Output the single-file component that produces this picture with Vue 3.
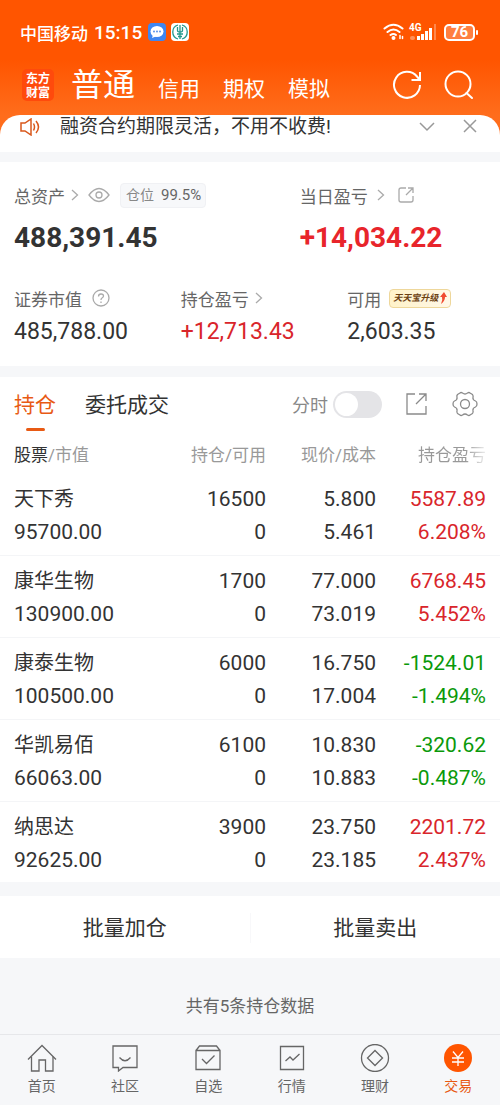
<script setup>
import { ref } from 'vue'

const accountTabs = ['普通', '信用', '期权', '模拟']
const activeAccount = ref('普通')
const activeTab = ref('持仓')
const timeShare = ref(false)

const holdings = [
  { name: '天下秀', value: '95700.00', amount: '16500', usable: '0', price: '5.800', cost: '5.461', profit: '5587.89', rate: '6.208%' },
  { name: '康华生物', value: '130900.00', amount: '1700', usable: '0', price: '77.000', cost: '73.019', profit: '6768.45', rate: '5.452%' },
  { name: '康泰生物', value: '100500.00', amount: '6000', usable: '0', price: '16.750', cost: '17.004', profit: '-1524.01', rate: '-1.494%' },
  { name: '华凯易佰', value: '66063.00', amount: '6100', usable: '0', price: '10.830', cost: '10.883', profit: '-320.62', rate: '-0.487%' },
  { name: '纳思达', value: '92625.00', amount: '3900', usable: '0', price: '23.750', cost: '23.185', profit: '2201.72', rate: '2.437%' }
]

const navItems = [
  { label: '首页', paths: ['M1 15.500 15 1.500 29 15.500', 'M4.500 12.500V27H12V16H18.500V27H26V12.500'] },
  { label: '社区', paths: ['M3 2H27V23.500H13L8.500 27V23.500H3Z', 'M9.500 13.500Q15 20 20.500 13.500'] },
  { label: '自选', paths: ['M3 6.500H27V25.500H3ZM3 6.500 6.500 2H23.500L27 6.500', 'M9 15 13.500 19.500 21.500 11.500'] },
  { label: '行情', paths: ['M3.500 2.500H26.500V25.500H3.500Z', 'M8.500 17 13 13 16 16 22.500 10'] },
  { label: '理财', paths: ['M1.500 14A13.500 13.500 0 1 0 28.500 14A13.500 13.500 0 1 0 1.500 14Z', 'M15 6.500 22.500 14 15 21.500 7.500 14Z'] },
  { label: '交易', active: true, paths: ['M10 7.500 15 13.500 20 7.500M9 14H21M9 18H21M15 13.500V22'] }
]
</script>

<template>
  <div class="page">
    <header class="top">
      <div class="status">
        <span class="carrier">中国移动</span>
        <span class="time">15:15</span>
        <svg class="status-app" viewBox="0 0 18 18">
          <rect width="18" height="18" rx="4" fill="#3f86f0" />
          <ellipse cx="9" cy="8.500" rx="6.500" ry="5.500" fill="#fff" />
          <path d="M5 12 4 15 9 13Z" fill="#fff" />
          <g fill="#4a88e8"><circle cx="6" cy="8.500" r="0.900" /><circle cx="9" cy="8.500" r="0.900" /><circle cx="12" cy="8.500" r="0.900" /></g>
        </svg>
        <svg class="status-app" viewBox="0 0 18 18">
          <rect width="18" height="18" rx="4" fill="#fff" />
          <g fill="none" stroke="#23998b" stroke-width="1.300">
            <path d="M7 16A7.300 7.300 0 0 1 7 2M11 2A7.300 7.300 0 0 1 11 16" />
            <path d="M9 2V16M6.500 4V7.500Q6.500 9 9 9Q11.500 9 11.500 7.500V4M6 11H12M7 13.500H11" />
          </g>
        </svg>
        <div class="status-right">
          <svg class="wifi" viewBox="0 0 22 18" fill="none" stroke="#fff" stroke-width="2" stroke-linecap="round">
            <path d="M1.500 5.500Q10.500 -2 19.500 5.500M4.500 9Q10.500 4 16.500 9M7.500 12Q10.500 10 13 12" />
            <circle cx="10.500" cy="15" r="1" fill="#fff" />
            <path d="M17 12.500V15.500M19.500 13.500V15.500" stroke-width="1.500" />
          </svg>
          <div class="signal">
            <span class="network">4G</span>
            <svg viewBox="0 0 28 18" fill="#fff">
              <rect x="1" y="13" width="5" height="4" rx="2" opacity="0.350" />
              <rect x="8" y="13" width="3" height="4" /><rect x="12" y="11" width="3" height="6" />
              <rect x="16" y="8" width="3" height="9" /><rect x="20" y="5" width="3" height="12" />
              <rect x="25" y="1" width="2" height="16" opacity="0.300" />
            </svg>
          </div>
          <div class="battery">76</div>
        </div>
      </div>

      <nav class="accounts">
        <div class="logo">东方财富</div>
        <div class="account-tabs">
          <button
            v-for="tab in accountTabs"
            :key="tab"
            type="button"
            :class="{ current: tab === activeAccount }"
            @click="activeAccount = tab"
          >{{ tab }}</button>
        </div>
        <button type="button" class="head-icon" aria-label="刷新">
          <svg viewBox="0 0 30 30" fill="none" stroke="#fff" stroke-width="2">
            <path d="M28 15A13 13 0 1 1 25 6.500L28 10M28 2V10H19.500" />
          </svg>
        </button>
        <button type="button" class="head-icon" aria-label="搜索">
          <svg viewBox="0 0 30 30" fill="none" stroke="#fff" stroke-width="2" stroke-linecap="round">
            <circle cx="14" cy="14" r="12.500" /><path d="M22.500 23 28 28" />
          </svg>
        </button>
      </nav>

      <div class="notice">
        <svg class="speaker" viewBox="0 0 20 18" fill="none" stroke="#d9581c" stroke-width="1.500">
          <path d="M1 5H5L11 1V17L5 13H1ZM13.500 5.500Q15.500 9 13.500 12.500M16 3Q21 9 16 15" />
        </svg>
        <p>融资合约期限灵活，不用不收费!</p>
        <button type="button" aria-label="展开">
          <svg viewBox="0 0 16 16" fill="none" stroke="#999" stroke-width="1.500"><path d="M1 4 8 11 15 4" /></svg>
        </button>
        <button type="button" aria-label="关闭">
          <svg viewBox="0 0 16 16" fill="none" stroke="#999" stroke-width="1.500"><path d="M2 1 14 13M14 1 2 13" /></svg>
        </button>
      </div>
    </header>

    <section class="assets">
      <div class="totals">
        <div>
          <div class="label tall">
            总资产
            <svg class="chevron" viewBox="0 0 8 14"><path d="M1 2 6.500 7 1 12" /></svg>
            <svg class="eye" viewBox="0 0 22 16" fill="none" stroke="#aaa" stroke-width="1.300">
              <path d="M1 8Q11 -5 21 8Q11 21 1 8Z" /><circle cx="11" cy="8" r="3" />
            </svg>
            <span class="ratio"><span>仓位</span><b>99.5%</b></span>
          </div>
          <div class="total">488,391.45</div>
        </div>
        <div>
          <div class="label tall">
            当日盈亏
            <svg class="chevron spaced" viewBox="0 0 8 14"><path d="M1 2 6.500 7 1 12" /></svg>
            <svg class="share-small" viewBox="0 0 18 18" fill="none" stroke="#aaa" stroke-width="1.300">
              <path d="M9 2H4Q2 2 2 4V14Q2 16 4 16H14Q16 16 16 14V10M11 2H16V7M16 2 9 9" />
            </svg>
          </div>
          <div class="total up">+14,034.22</div>
        </div>
      </div>
      <div class="details">
        <div>
          <div class="label">
            证券市值
            <svg class="help" viewBox="0 0 18 18" fill="none" stroke="#aaa" stroke-width="1.300">
              <circle cx="9" cy="9" r="8" />
              <path d="M6.500 7.500Q6.500 5 9 5Q11.500 5 11.500 7Q11.500 8 10 9Q9 9.500 9 11M9 12.500V14" />
            </svg>
          </div>
          <div class="figure">485,788.00</div>
        </div>
        <div>
          <div class="label">
            持仓盈亏
            <svg class="chevron" viewBox="0 0 8 14"><path d="M1 2 6.500 7 1 12" /></svg>
          </div>
          <div class="figure up">+12,713.43</div>
        </div>
        <div>
          <div class="label">
            可用
            <span class="upgrade">
              <em>天天宝升级</em>
              <svg viewBox="0 0 8 12"><path d="M5 0 8 5H6Q6 9 2 12Q4 8 3 5H1Z" fill="#f04b32" /></svg>
            </span>
          </div>
          <div class="figure">2,603.35</div>
        </div>
      </div>
    </section>

    <section class="positions">
      <div class="toolbar">
        <button
          v-for="tab in ['持仓', '委托成交']"
          :key="tab"
          type="button"
          class="tab"
          :class="{ active: tab === activeTab }"
          @click="activeTab = tab"
        >{{ tab }}</button>
        <label class="switch">
          分时
          <input v-model="timeShare" type="checkbox" role="switch">
        </label>
        <button type="button" class="tool" aria-label="分享">
          <svg viewBox="0 0 26 26" fill="none" stroke="#8a8a8a" stroke-width="1.300">
            <path d="M11 3H3V23H22V15M15 3H22V10M22 3 12 13" />
          </svg>
        </button>
        <button type="button" class="tool gear" aria-label="设置">
          <svg viewBox="0 0 26 26" fill="none" stroke="#8a8a8a" stroke-width="1.300" stroke-linejoin="round">
            <path d="M8 2Q9 1 10.500 2Q13 4 15.500 2Q17 1 18 2L20.500 3.500Q21.500 5 21 6.500Q20.500 9 23.500 10Q25 10.500 25 13Q25 15.500 23.500 16Q20.500 17 21 19.500Q21.500 21.500 20.500 22.500L18 24Q17 25 15.500 24Q13 22 10.500 24Q9 25 8 24L5.500 22.500Q4.500 21.500 5 19.500Q5.500 17 2.500 16Q1 15.500 1 13Q1 10.500 2.500 10Q5.500 9 5 6.500Q4.500 4.500 5.500 3.500Z" />
            <circle cx="13" cy="13" r="4.500" />
          </svg>
        </button>
      </div>

      <table>
        <thead>
          <tr>
            <th><strong>股票</strong>/市值</th>
            <th>持仓/可用</th>
            <th>现价/成本</th>
            <th><span class="fade">持仓盈亏</span></th>
          </tr>
        </thead>
        <tbody>
          <tr v-for="item in holdings" :key="item.name">
            <td><div class="name">{{ item.name }}</div><div>{{ item.value }}</div></td>
            <td><div>{{ item.amount }}</div><div>{{ item.usable }}</div></td>
            <td><div>{{ item.price }}</div><div>{{ item.cost }}</div></td>
            <td :class="item.profit.startsWith('-') ? 'down' : 'up'"><div>{{ item.profit }}</div><div>{{ item.rate }}</div></td>
          </tr>
        </tbody>
      </table>
    </section>

    <div class="batch">
      <button type="button">批量加仓</button>
      <button type="button">批量卖出</button>
    </div>

    <p class="count">共有5条持仓数据</p>

    <nav class="tabbar">
      <a v-for="item in navItems" :key="item.label" href="#" :class="{ active: item.active }">
        <svg viewBox="0 0 30 28" fill="none" stroke="currentColor" stroke-width="1.300">
          <circle v-if="item.active" cx="15" cy="14" r="14" fill="#ff5500" stroke="none" />
          <path v-for="d in item.paths" :key="d" :d="d" :stroke="item.active ? '#fff' : 'currentColor'" />
        </svg>
        <span>{{ item.label }}</span>
      </a>
    </nav>
  </div>
</template>

<style>
body {
  margin: 0;
  background: #f6f7f9;
}
</style>

<style scoped>
.page {
  display: flex;
  flex-direction: column;
  min-height: 100vh;
  color: #333;
  font-family: Roboto, "Noto Sans CJK SC", sans-serif;
  font-size: 17px;
}

svg {
  display: block;
  flex: none;
}

button {
  padding: 0;
  border: 0;
  background: none;
  color: inherit;
  font: inherit;
}

p {
  margin: 0;
}

.top {
  background: linear-gradient(#ff5500 60px, #ff6d1c 115px);
  color: #fff;
}

.status {
  display: flex;
  align-items: center;
  height: 64px;
  padding: 0 21px 0 20px;
}

.carrier {
  font-weight: 500;
}

.time {
  margin: 0 6px;
  font-size: 19px;
  font-weight: 500;
}

.status-app {
  width: 18px;
  height: 18px;
  margin-right: 5px;
}

.status-right {
  display: flex;
  align-items: center;
  margin-left: auto;
}

.wifi {
  width: 22px;
  height: 18px;
  margin-right: 4px;
}

.signal {
  position: relative;
  margin-right: 7px;
}

.signal svg {
  width: 28px;
  height: 18px;
}

.network {
  position: absolute;
  top: 0;
  left: 0;
  font-size: 10px;
  font-weight: 700;
  line-height: 10px;
}

.battery {
  position: relative;
  width: 27px;
  margin-right: 4px;
  border: 2px solid #fff;
  border-radius: 5px;
  background: rgba(255, 255, 255, 0.25);
  font-size: 15px;
  font-weight: 700;
  line-height: 13px;
  text-align: center;
}

.battery::after {
  content: "";
  position: absolute;
  top: 4px;
  right: -5px;
  width: 2px;
  height: 5px;
  border-radius: 1px;
  background: #fff;
}

.accounts {
  display: flex;
  align-items: center;
  height: 42px;
  padding: 0 26px 9px 22px;
}

.logo {
  box-sizing: border-box;
  width: 32px;
  height: 32px;
  padding: 2px 4px;
  border-radius: 5px;
  background: #ff4a0c;
  font-family: "Noto Sans CJK SC", sans-serif;
  font-size: 12px;
  font-weight: 700;
  line-height: 14px;
}

.account-tabs {
  display: flex;
  flex: 1;
  align-items: baseline;
  gap: 23px;
  margin-left: 17px;
  padding-top: 4px;
}

.account-tabs button {
  font-size: 21px;
  line-height: 42px;
}

.account-tabs .current {
  font-size: 32px;
}

.head-icon {
  margin-left: 22px;
}

.head-icon svg {
  width: 30px;
  height: 30px;
}

.notice {
  display: flex;
  align-items: center;
  height: 23px;
  padding: 0 22px 14px 20px;
  border-radius: 20px 20px 0 0;
  background: #fff;
  color: #333;
}

.speaker {
  width: 20px;
  height: 18px;
}

.notice p {
  flex: 1;
  margin-left: 20px;
  font-size: 19px;
  line-height: 23px;
}

.notice button {
  margin-left: 27px;
}

.notice button svg {
  width: 16px;
  height: 16px;
}

.assets {
  margin-top: 10px;
  padding: 20px 0 18px;
  background: #fff;
}

.totals,
.details {
  display: grid;
  grid-template-columns: 4fr 3fr;
}

.details {
  grid-template-columns: repeat(3, 1fr);
  margin-top: 30px;
}

.totals > div,
.details > div {
  padding-left: 14px;
}

.label {
  display: flex;
  align-items: center;
  height: 24px;
  color: #666;
  white-space: nowrap;
}

.label.tall {
  height: 26px;
}

.chevron {
  width: 8px;
  height: 14px;
  margin-left: 6px;
  fill: none;
  stroke: #aaa;
  stroke-width: 1.3;
}

.chevron.spaced {
  margin-left: 9px;
}

.eye {
  width: 22px;
  height: 16px;
  margin-left: 9px;
}

.ratio {
  display: flex;
  gap: 7px;
  margin-left: 10px;
  padding: 0 4px 0 5px;
  border: 1px solid #f0f1f4;
  border-radius: 4px;
  background: #f7f8fa;
  color: #888;
  font-size: 14px;
  line-height: 23px;
}

.ratio b {
  color: #666;
  font-size: 15px;
  font-weight: 400;
}

.share-small,
.help {
  width: 18px;
  height: 18px;
  margin-left: 12px;
}

.help {
  margin-left: 10px;
}

.total {
  margin-top: 12px;
  font-size: 28px;
  font-weight: 700;
  line-height: 36px;
}

.figure {
  margin-top: 6px;
  font-size: 23px;
  line-height: 32px;
}

.upgrade {
  display: flex;
  align-items: center;
  margin-left: 8px;
  padding: 0 3px;
  border: 1px solid #eed79b;
  border-radius: 4px;
  background: linear-gradient(90deg, #fff2c9, #fff8e8);
  color: #6b4012;
  font-size: 9px;
  font-weight: 700;
  line-height: 17px;
}

.upgrade svg {
  width: 8px;
  height: 12px;
  margin-left: 1px;
}

.up {
  color: #d9252b;
}

.total.up {
  color: #e8252b;
}

.down {
  color: #0a990a;
}

.positions {
  margin-top: 11px;
  background: #fff;
}

.toolbar {
  display: flex;
  align-items: center;
  height: 54px;
  padding: 0 22px 2px 14px;
}

.tab {
  position: relative;
  margin-right: 29px;
  padding-top: 2px;
  font-size: 21px;
  line-height: 52px;
}

.tab.active {
  color: #e85a14;
}

.tab.active::after {
  content: "";
  position: absolute;
  bottom: 0;
  left: 50%;
  width: 19px;
  height: 3px;
  margin-left: -9px;
  border-radius: 2px;
  background: #e85a14;
}

.switch {
  display: flex;
  align-items: center;
  gap: 5px;
  margin-left: auto;
  color: #888;
  font-size: 18px;
}

.switch input {
  width: 49px;
  height: 27px;
  margin: 0;
  border-radius: 14px;
  background: #e4e4e7;
  appearance: none;
}

.switch input::before {
  content: "";
  display: block;
  width: 23px;
  height: 23px;
  margin: 2px;
  border-radius: 50%;
  background: #fff;
}

.switch input:checked {
  background: #ff5500;
}

.switch input:checked::before {
  margin-left: 24px;
}

.tool {
  margin-left: 22px;
}

.tool svg {
  width: 26px;
  height: 26px;
}

table {
  width: 100%;
  table-layout: fixed;
  border-collapse: collapse;
}

th,
td {
  padding: 0;
  text-align: right;
  white-space: nowrap;
}

th {
  height: 41px;
  color: #999;
  font-weight: 400;
}

th strong {
  color: #333;
  font-weight: 400;
}

th:first-child,
td:first-child {
  width: 28%;
  padding-left: 14px;
  text-align: left;
}

th:nth-child(3),
td:nth-child(3),
th:last-child,
td:last-child {
  width: 22%;
}

th:last-child,
td:last-child {
  padding-right: 14px;
}

.fade {
  background: linear-gradient(90deg, #999 70%, #eee);
  background-clip: text;
  color: transparent;
}

td {
  padding: 9px 0 6px;
  border-bottom: 1px solid #f4f5f7;
  font-size: 21px;
  line-height: 33px;
}

tr:last-child td {
  padding-bottom: 5px;
  border: 0;
}

.name {
  font-size: 20px;
}

.batch {
  display: flex;
  margin-top: 14px;
  padding: 17px 0 15px;
  background: #fff;
}

.batch button {
  flex: 1;
  font-size: 21px;
  line-height: 30px;
}

.batch button + button {
  border-left: 1px solid #f8f8fa;
}

.count {
  padding: 36px 0 12px;
  color: #666;
  line-height: 24px;
  text-align: center;
}

.tabbar {
  display: flex;
  margin-top: auto;
  border-top: 1px solid #e6e7ea;
}

.tabbar a {
  display: flex;
  flex: 1;
  flex-direction: column;
  align-items: center;
  gap: 4px;
  padding: 9px 0;
  color: #666;
  font-size: 14px;
  line-height: 20px;
  text-decoration: none;
}

.tabbar svg {
  width: 30px;
  height: 28px;
}

.tabbar .active {
  color: #e85a14;
}
</style>
